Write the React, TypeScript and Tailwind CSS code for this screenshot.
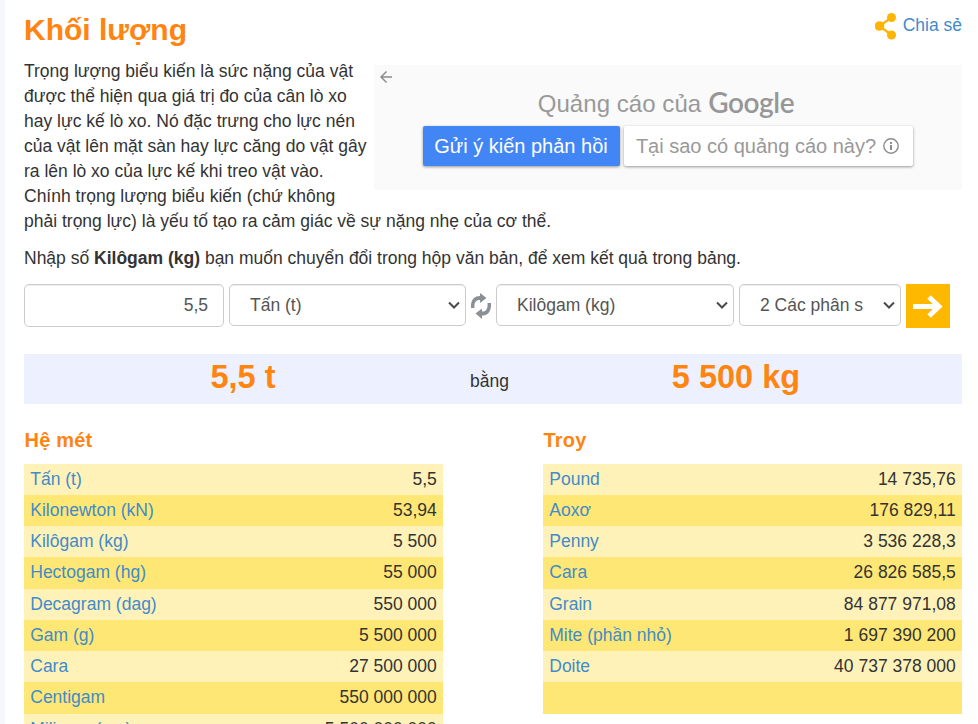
import { ReactNode } from 'react';

interface Row {
    name: string;
    value: string;
}

const metric: Row[] = [
    { name: 'Tấn (t)', value: '5,5' },
    { name: 'Kilonewton (kN)', value: '53,94' },
    { name: 'Kilôgam (kg)', value: '5 500' },
    { name: 'Hectogam (hg)', value: '55 000' },
    { name: 'Decagram (dag)', value: '550 000' },
    { name: 'Gam (g)', value: '5 500 000' },
    { name: 'Cara', value: '27 500 000' },
    { name: 'Centigam', value: '550 000 000' },
    { name: 'Miligam (mg)', value: '5 500 000 000' },
];

const troy: Row[] = [
    { name: 'Pound', value: '14 735,76' },
    { name: 'Aoxơ', value: '176 829,11' },
    { name: 'Penny', value: '3 536 228,3' },
    { name: 'Cara', value: '26 826 585,5' },
    { name: 'Grain', value: '84 877 971,08' },
    { name: 'Mite (phần nhỏ)', value: '1 697 390 200' },
    { name: 'Doite', value: '40 737 378 000' },
    { name: '', value: '' },
];

function UnitTable({ title, rows }: { title: string; rows: Row[] }) {
    return (
        <section className="w-[419px]">
            <h2 className="h-[25px] pl-[0.5px] text-[20px] leading-[25px] font-bold tracking-[0.2px] text-[#ff8410]">{title}</h2>
            <div className="mt-[10.8px]">
                {rows.map((row, i) => (
                    <div key={i} className="flex h-[31.23px] items-center justify-between bg-[#fef2b8] px-[6.25px] pb-[0.2px] even:bg-[#ffe775]">
                        <a className="text-[#428bca]">{row.name}</a>
                        <span>{row.value}</span>
                    </div>
                ))}
            </div>
        </section>
    );
}

function SelectBox({ className, children }: { className: string; children: ReactNode }) {
    return (
        <div className={`flex h-[42px] items-center justify-between rounded-[5px] border border-[#ccc] pr-[5px] pl-[20px] text-[#555] shadow-[inset_0_1px_1px_rgba(0,0,0,0.075)] ${className}`}>
            <span className="whitespace-nowrap">{children}</span>
            <svg width="12" height="8" viewBox="0 0 12 8" fill="none" stroke="#4a4a4a" strokeWidth="2">
                <path d="M1 1.500l5 5 5-5" />
            </svg>
        </div>
    );
}

export default function App() {
    return (
        <div className="h-[724px] overflow-hidden border-l-[5px] border-[#f5f7fd] bg-white pr-4 pl-[19px] font-['Liberation_Sans',Arial,sans-serif] text-[17.5px] leading-[25px] text-[#333]">
            {/* Header */}
            <header className="flex h-[59px] justify-between">
                <h1 className="pt-[11px] text-[30px] leading-[38px] font-bold text-[#ff8410]">Khối lượng</h1>
                <a className="flex h-[26px] gap-[5px] pt-[13px] text-[#428bca]">
                    <svg width="23" height="27" viewBox="0 0 23 27" fill="#ffb400">
                        <path d="M16.500 4.500L4.500 13L16.500 22" fill="none" stroke="#ffb400" strokeWidth="2.200" />
                        <circle cx="16.500" cy="4.500" r="4.500" />
                        <circle cx="4.500" cy="13" r="4.800" />
                        <circle cx="16.500" cy="22" r="4.500" />
                    </svg>
                    <span>Chia sẻ</span>
                </a>
            </header>

            {/* Intro and ad */}
            <div className="flex h-[175px]">
                <p className="w-[350px] shrink-0 whitespace-nowrap">
                    Trọng lượng biểu kiến là sức nặng của vật<br />
                    được thể hiện qua giá trị đo của cân lò xo<br />
                    hay lực kế lò xo. Nó đặc trưng cho lực nén<br />
                    của vật lên mặt sàn hay lực căng do vật gây<br />
                    ra lên lò xo của lực kế khi treo vật vào.<br />
                    Chính trọng lượng biểu kiến (chứ không<br />
                    phải trọng lực) là yếu tố tạo ra cảm giác về sự nặng nhẹ của cơ thể.
                </p>
                <aside className="relative mt-[6px] h-[125px] w-[588px] bg-[#fafafa] pt-[21px] text-[#999]">
                    <svg className="absolute top-[5px] left-[6px]" width="13" height="14" viewBox="0 0 13 14" fill="none" stroke="#8c8c8c" strokeWidth="1.500">
                        <path d="M12 7H1.500M6.500 1.500L1 7l5.500 5.500" />
                    </svg>
                    <div className="flex h-[35px] items-center justify-center gap-[7px] pr-[4px] text-[24px]">
                        <span className="tracking-[0.05px]">Quảng cáo của</span>
                        <span className="relative -top-px font-[Lato] text-[28px] font-semibold tracking-[-0.4px] text-[#979797]">Google</span>
                    </div>
                    <div className="mt-[5px] flex justify-center gap-[4px] pr-px text-[20px]">
                        <div className="flex h-[40px] w-[197px] items-center justify-center rounded-[2px] bg-[#4285f4] text-white shadow-[0_1px_3px_rgba(0,0,0,0.4)]">Gửi ý kiến phản hồi</div>
                        <div className="flex h-[40px] w-[289px] items-center justify-center gap-[7px] rounded-[2px] bg-white pr-px shadow-[0_1px_3px_rgba(0,0,0,0.4)]">
                            Tại sao có quảng cáo này?
                            <svg width="16" height="16" viewBox="0 0 16 16" fill="none" stroke="#8c8c8c">
                                <circle cx="8" cy="8" r="7.200" strokeWidth="1.400" />
                                <path d="M8 7v5M8 4v2" strokeWidth="2" />
                            </svg>
                        </div>
                    </div>
                </aside>
            </div>

            <p className="mt-[12px]">
                Nhập số <b>Kilôgam (kg)</b> bạn muốn chuyển đổi trong hộp văn bản, để xem kết quả trong bảng.
            </p>

            {/* Converter form */}
            <div className="mt-[13px] flex h-[44px]">
                <div className="flex h-[43px] w-[200px] items-center justify-end rounded-[5px] border border-[#ccc] pr-[15px] text-[#555] shadow-[inset_0_1px_1px_rgba(0,0,0,0.075)]">
                    5,5
                </div>
                <SelectBox className="ml-[5px] w-[237px]">Tấn (t)</SelectBox>
                <svg className="mt-[9px] ml-[5px]" width="20" height="26" viewBox="0 0 20 26" fill="#8b8f96">
                    <path d="M0 15C-.5 7 3 3 9 3V0l6.500 5L9 10V7C5 7 3 9 3.500 15Z" />
                    <path d="M20 10C20.500 18 17 22.500 11 22.500V26L4.500 20.500L11 15.500V18.500C15 18.500 17 16 16.500 10Z" />
                </svg>
                <SelectBox className="ml-[5px] w-[238px]">Kilôgam (kg)</SelectBox>
                <SelectBox className="ml-[5px] w-[162px]">2 Các phân s</SelectBox>
                <button className="ml-[5px] flex h-[44px] w-[44px] items-center justify-center bg-[#ffb800]">
                    <svg width="30" height="24" viewBox="0 0 30 24" fill="none" stroke="white" strokeWidth="5">
                        <path d="M0 12.500H26M16 3L26 12.500L16 22" />
                    </svg>
                </button>
            </div>

            {/* Result */}
            <div className="mt-[26px] flex h-[50px] items-center bg-[#edf1ff]">
                <div className="relative -top-[2px] w-[438px] text-center text-[32.5px] font-bold text-[#ff8410]">5,5 t</div>
                <div className="relative top-[2px] w-[55px] text-center">bằng</div>
                <div className="relative -top-[2px] w-[438px] text-center text-[32.5px] font-bold text-[#ff8410]">5 500 kg</div>
            </div>

            <div className="mt-[24px] flex justify-between">
                <UnitTable title="Hệ mét" rows={metric} />
                <UnitTable title="Troy" rows={troy} />
            </div>
        </div>
    );
}
